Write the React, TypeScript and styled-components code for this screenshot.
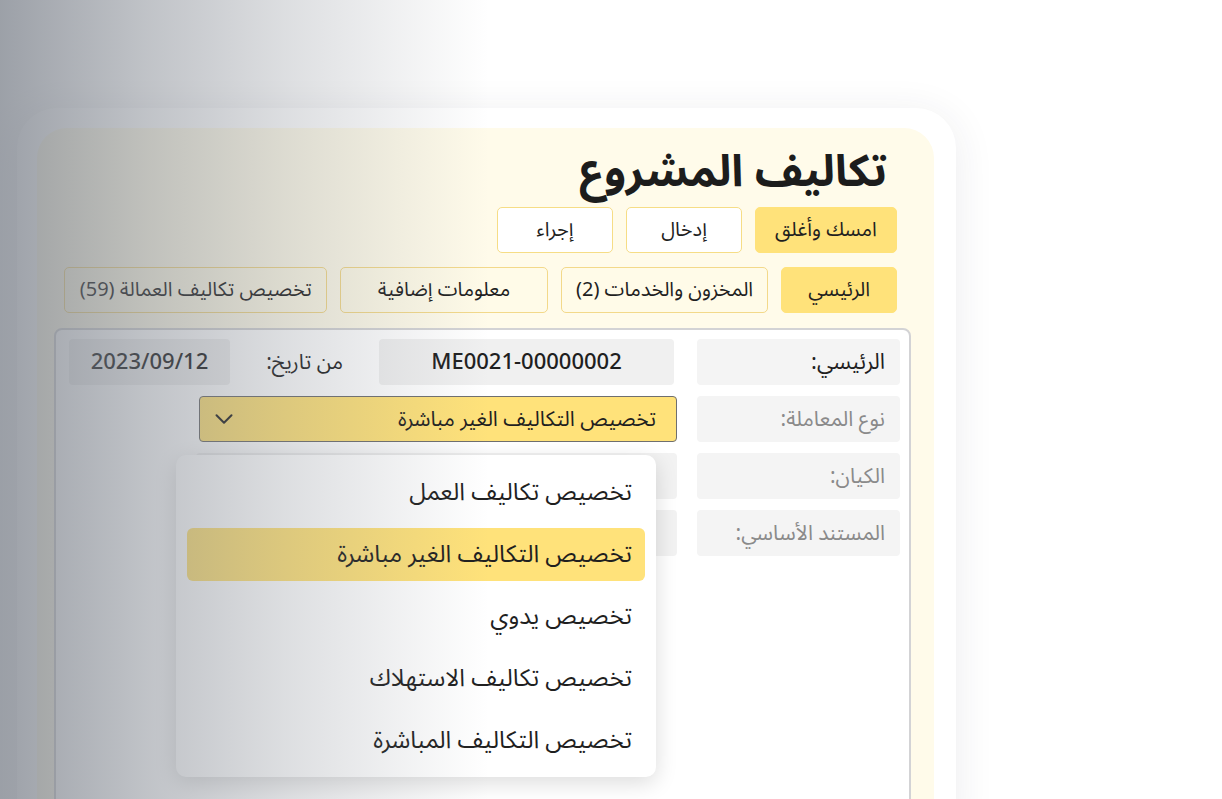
import styled, { createGlobalStyle } from 'styled-components';
import { ChevronDown } from 'lucide-react';

const GlobalStyle = createGlobalStyle`
  html, body {
    margin: 0;
    padding: 0;
    background: #ffffff;
    overflow: hidden;
  }
  body {
    font-family: "Noto Sans Arabic", "Noto Sans", "DejaVu Sans", sans-serif;
    color: #1f1f1f;
  }
`;

const Page = styled.div`
  position: relative;
  width: 1222px;
  height: 799px;
  padding: 108px 0 0 17px;
  box-sizing: border-box;
  overflow: hidden;
`;

const Shade = styled.div`
  position: absolute;
  inset: 0;
  pointer-events: none;
  z-index: 10;
  background: linear-gradient(
    90deg,
    rgba(118, 124, 134, 0.72) 0%,
    rgba(118, 124, 134, 0.46) 12%,
    rgba(118, 124, 134, 0.24) 24%,
    rgba(118, 124, 134, 0.1) 33%,
    rgba(118, 124, 134, 0) 40%
  );
`;

const Frame = styled.div`
  width: 939px;
  height: 720px;
  box-sizing: border-box;
  padding: 20px 22px 0 20px;
  background: #ffffff;
  border-radius: 40px 40px 0 0;
  box-shadow: 0 6px 40px rgba(40, 40, 70, 0.09);
`;

const Panel = styled.div`
  direction: rtl;
  height: 100%;
  box-sizing: border-box;
  padding: 12px 23px 0 17px;
  background: #fffbea;
  border-radius: 30px 30px 0 0;
`;

const Header = styled.div`
  padding: 0 14px 0 10px;
`;

const Title = styled.h1`
  margin: 0;
  font-size: 44px;
  line-height: 64px;
  font-weight: 700;
  color: #1c1c1c;
  padding-right: 10px;
`;

const Row = styled.div<{ $top: number }>`
  display: flex;
  gap: 13px;
  margin-top: ${({ $top }) => $top}px;
`;

const ActionButton = styled.button<{ $active?: boolean }>`
  height: 46px;
  padding: 0 12px;
  font-family: inherit;
  font-size: 20px;
  color: #1f1f1f;
  border-radius: 5px;
  border: 1.5px solid ${({ $active }) => ($active ? '#ffe27a' : '#f6dd86')};
  background: ${({ $active }) => ($active ? '#ffe27a' : '#ffffff')};
  cursor: pointer;
  width: ${({ $active }) => ($active ? '142px' : '116px')};
`;

const TabButton = styled.button<{ $active?: boolean; $width: number }>`
  height: 46px;
  width: ${({ $width }) => $width}px;
  padding: 0 10px;
  font-family: inherit;
  font-size: 20px;
  color: #1f1f1f;
  border-radius: 5px;
  border: 1.5px solid ${({ $active }) => ($active ? '#ffe27a' : '#f3d98a')};
  background: ${({ $active }) => ($active ? '#ffe27a' : '#fffbe8')};
  cursor: pointer;
`;

const FormCard = styled.div`
  margin-top: 15px;
  height: 480px;
  box-sizing: border-box;
  padding: 9px 9px 0 13px;
  background: #ffffff;
  border: 2px solid #d3d3d5;
  border-radius: 8px;
  display: flex;
  flex-direction: column;
  gap: 11px;
`;

const FieldRow = styled.div`
  display: flex;
  align-items: center;
  gap: 23px;
`;

const ValueGroup = styled.div`
  display: flex;
  align-items: center;
`;

const Label = styled.div<{ $strong?: boolean }>`
  width: 203px;
  height: 46px;
  flex-shrink: 0;
  box-sizing: border-box;
  padding: 0 15px;
  display: flex;
  align-items: center;
  background: #f4f4f4;
  border-radius: 4px;
  font-size: ${({ $strong }) => ($strong ? '22px' : '21px')};
  color: ${({ $strong }) => ($strong ? '#1f1f1f' : '#8a8a8a')};
`;

const ValueBox = styled.div<{ $width: number }>`
  width: ${({ $width }) => $width}px;
  height: 46px;
  flex-shrink: 0;
  box-sizing: border-box;
  display: flex;
  align-items: center;
  justify-content: center;
  background: #f0f0f0;
  border-radius: 4px;
  font-size: 22px;
  font-weight: 500;
  color: #1f1f1f;
  direction: ltr;
`;

const InlineLabel = styled.div`
  width: 149px;
  flex-shrink: 0;
  box-sizing: border-box;
  padding-right: 36px;
  font-size: 21px;
  color: #1f1f1f;
`;

const SelectWrap = styled.div`
  position: relative;
  width: 478px;
  margin-right: -3px;
`;

const SelectBox = styled.div`
  height: 46px;
  box-sizing: border-box;
  display: flex;
  align-items: center;
  justify-content: space-between;
  padding: 0 20px 0 9px;
  background: #ffe27a;
  border: 1.5px solid #6f6f6f;
  border-radius: 4px;
  font-size: 21px;
  color: #1f1f1f;
`;

const Menu = styled.div`
  position: absolute;
  top: calc(100% + 13px);
  right: 21px;
  width: 480px;
  box-sizing: border-box;
  padding: 11px 11px 10px;
  background: #ffffff;
  border-radius: 10px;
  box-shadow: 0 6px 22px rgba(0, 0, 0, 0.14);
  display: flex;
  flex-direction: column;
  gap: 9px;
  z-index: 5;
`;

const MenuItem = styled.div<{ $selected?: boolean }>`
  height: 53px;
  display: flex;
  align-items: center;
  padding: 0 13px;
  border-radius: 6px;
  font-size: 24px;
  color: #1f1f1f;
  background: ${({ $selected }) => ($selected ? '#ffe27a' : 'transparent')};
`;

const PlainBox = styled.div`
  width: 481px;
  height: 46px;
  background: #f2f2f2;
  border-radius: 4px;
  margin-right: -3px;
`;

const actions = ['امسك وأغلق', 'إدخال', 'إجراء'];

const tabs = [
  { title: 'الرئيسي', width: 116 },
  { title: 'المخزون والخدمات (2)', width: 208 },
  { title: 'معلومات إضافية', width: 208 },
  { title: 'تخصيص تكاليف العمالة (59)', width: 264 },
];

const options = [
  'تخصيص تكاليف العمل',
  'تخصيص التكاليف الغير مباشرة',
  'تخصيص يدوي',
  'تخصيص تكاليف الاستهلاك',
  'تخصيص التكاليف المباشرة',
];

const selected = 'تخصيص التكاليف الغير مباشرة';

const App = () => {
  return (
    <>
      <GlobalStyle />
      <Page>
        <Frame>
          <Panel>
            <Header>
              <Title>تكاليف المشروع</Title>
              <Row $top={3}>
                {actions.map((action, index) => (
                  <ActionButton key={action} $active={index === 0}>
                    {action}
                  </ActionButton>
                ))}
              </Row>
              <Row $top={14}>
                {tabs.map((tab, index) => (
                  <TabButton key={tab.title} $active={index === 0} $width={tab.width}>
                    {tab.title}
                  </TabButton>
                ))}
              </Row>
            </Header>
            <FormCard>
              <FieldRow>
                <Label $strong>الرئيسي:</Label>
                <ValueGroup>
                  <ValueBox $width={295}>ME0021-00000002</ValueBox>
                  <InlineLabel>من تاريخ:</InlineLabel>
                  <ValueBox $width={161}>2023/09/12</ValueBox>
                </ValueGroup>
              </FieldRow>
              <FieldRow>
                <Label>نوع المعاملة:</Label>
                <SelectWrap>
                  <SelectBox>
                    <span>{selected}</span>
                    <ChevronDown size={30} strokeWidth={1.6} color="#222" />
                  </SelectBox>
                  <Menu>
                    {options.map((option) => (
                      <MenuItem key={option} $selected={option === selected}>
                        {option}
                      </MenuItem>
                    ))}
                  </Menu>
                </SelectWrap>
              </FieldRow>
              <FieldRow>
                <Label>الكيان:</Label>
                <PlainBox />
              </FieldRow>
              <FieldRow>
                <Label>المستند الأساسي:</Label>
                <PlainBox />
              </FieldRow>
            </FormCard>
          </Panel>
        </Frame>
        <Shade />
      </Page>
    </>
  );
};

export default App;
